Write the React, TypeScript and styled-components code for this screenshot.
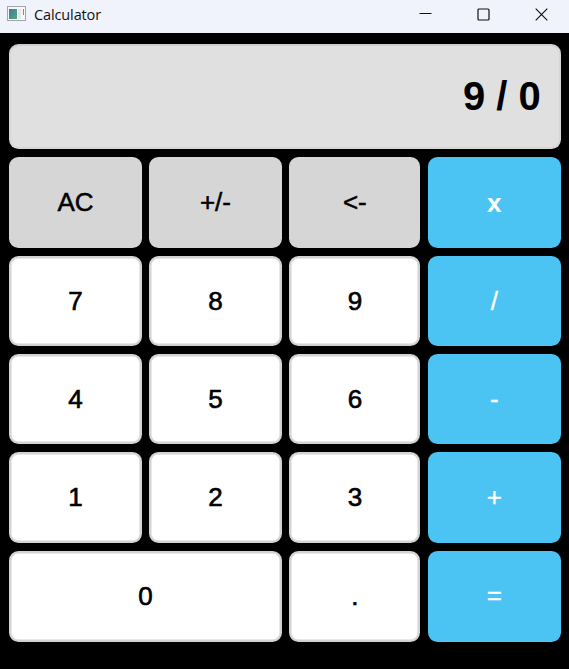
import React from "react";
import styled, { createGlobalStyle } from "styled-components";

const GlobalStyle = createGlobalStyle`
  html, body { margin: 0; background: #000; overflow: hidden; }
  * { box-sizing: border-box; }
`;

const Window = styled.div`
  width: 569px;
  height: 669px;
  display: flex;
  flex-direction: column;
  background: #000;
  font-family: "Liberation Sans", Arial, sans-serif;
`;

const TitleBar = styled.header`
  height: 33px;
  flex: none;
  display: flex;
  align-items: flex-start;
  padding-left: 7px;
  background: #f0f3fb;
`;

const AppIcon = styled.svg`
  flex: none;
  margin-top: 6px;
`;

const Title = styled.span`
  flex: 1;
  margin: 5px 0 0 8px;
  font: 14.5px/20px "Open Sans", sans-serif;
  letter-spacing: -0.12px;
  color: #111;
`;

const WindowControls = styled.div`
  display: flex;
  width: 174px;
  height: 28px;
`;

const ControlButton = styled.button`
  flex: 1;
  display: grid;
  place-items: center;
  padding: 0 0 0 3px;
  border: 0;
  background: none;
`;

const Body = styled.main`
  display: flex;
  flex-direction: column;
  gap: 8px;
  padding: 11px 8.5px 0 9.3px;
`;

const Display = styled.output`
  height: 105px;
  display: flex;
  align-items: center;
  justify-content: flex-end;
  padding: 0 17.7px 1px 0;
  border: 2px solid #d6d6d6;
  border-top-color: #cecece;
  border-radius: 9.5px;
  background: #e0e0e0;
  color: #000;
  font-size: 40px;
  font-weight: bold;
`;

const Keypad = styled.div`
  display: grid;
  grid-template-columns: 132.3px 132.3px 131.2px 132.4px;
  grid-template-rows: 91px 90.7px 90px 91px 90.7px;
  column-gap: 7.7px;
  row-gap: 7.8px;
`;

type KeyKind = "digit" | "action" | "operator";

const palette = {
  digit: { face: "#fff", edge: "#d3d3d3", ink: "#000", weight: "0.65px" },
  action: { face: "#d6d6d6", edge: "#d6d6d6", ink: "#000", weight: "0.5px" },
  operator: { face: "#4bc4f4", edge: "#4bc4f4", ink: "#fff", weight: "0.35px" },
};

const Key = styled.button<{ $kind: KeyKind; $span?: number; $bold?: boolean; $lift?: number }>`
  grid-column: span ${(p) => p.$span ?? 1};
  padding: 0 0 ${(p) => (p.$bold ? 0 : 1 + (p.$lift ?? 0))}px;
  border: 2px solid ${(p) => palette[p.$kind].edge};
  border-radius: 9.5px;
  box-shadow: inset 0 0 0 0.5px ${(p) => palette[p.$kind].edge};
  background: ${(p) => palette[p.$kind].face};
  color: ${(p) => palette[p.$kind].ink};
  font: ${(p) => (p.$bold ? "bold" : "normal")} 26px/30px "Liberation Sans", Arial, sans-serif;
  -webkit-text-stroke: ${(p) => (p.$bold ? "0" : palette[p.$kind].weight)} currentColor;
`;

interface KeyDef {
  label: string;
  kind: KeyKind;
  span?: number;
  bold?: boolean;
  lift?: number;
}

const keys: KeyDef[] = [
  { label: "AC", kind: "action" },
  { label: "+/-", kind: "action" },
  { label: "<-", kind: "action" },
  { label: "x", kind: "operator", bold: true },
  { label: "7", kind: "digit" },
  { label: "8", kind: "digit" },
  { label: "9", kind: "digit" },
  { label: "/", kind: "operator" },
  { label: "4", kind: "digit" },
  { label: "5", kind: "digit" },
  { label: "6", kind: "digit" },
  { label: "-", kind: "operator" },
  { label: "1", kind: "digit" },
  { label: "2", kind: "digit" },
  { label: "3", kind: "digit" },
  { label: "+", kind: "operator" },
  { label: "0", kind: "digit", span: 2 },
  { label: ".", kind: "digit" },
  { label: "=", kind: "operator", lift: 2 },
];

export default function App() {
  return (
    <>
      <GlobalStyle />
      <Window>
        <TitleBar>
          <AppIcon width="19" height="15" viewBox="0 0 19 15">
            <defs>
              <linearGradient id="screen" x1="0" y1="0" x2="1" y2="1">
                <stop offset="0" stopColor="#4177a8" />
                <stop offset="1" stopColor="#55a878" />
              </linearGradient>
            </defs>
            <rect x="0.5" y="0.5" width="18" height="14" fill="#f7f7f7" stroke="#a1a5a9" />
            <rect x="2" y="3" width="8" height="10" fill="url(#screen)" />
            <rect x="11" y="3" width="3" height="10" fill="#e4e8e9" />
            <rect x="16" y="3" width="1" height="6" fill="#5b9aa0" />
          </AppIcon>
          <Title>Calculator</Title>
          <WindowControls>
            <ControlButton aria-label="Minimize">
              <svg width="13" height="13" viewBox="0 0 13 13">
                <path d="M0.5 5.5H12.5" stroke="#111" />
              </svg>
            </ControlButton>
            <ControlButton aria-label="Maximize">
              <svg width="13" height="13" viewBox="0 0 13 13">
                <rect x="1" y="1" width="11" height="11" rx="1" fill="none" stroke="#111" strokeWidth="1.2" />
              </svg>
            </ControlButton>
            <ControlButton aria-label="Close">
              <svg width="13" height="13" viewBox="0 0 13 13">
                <path d="M0.7 0.7L12.3 12.3M12.3 0.7L0.7 12.3" stroke="#111" strokeWidth="1.15" />
              </svg>
            </ControlButton>
          </WindowControls>
        </TitleBar>
        <Body>
          <Display>9 / 0</Display>
          <Keypad>
            {keys.map((k) => (
              <Key key={k.label} $kind={k.kind} $span={k.span} $bold={k.bold} $lift={k.lift}>
                {k.label}
              </Key>
            ))}
          </Keypad>
        </Body>
      </Window>
    </>
  );
}
